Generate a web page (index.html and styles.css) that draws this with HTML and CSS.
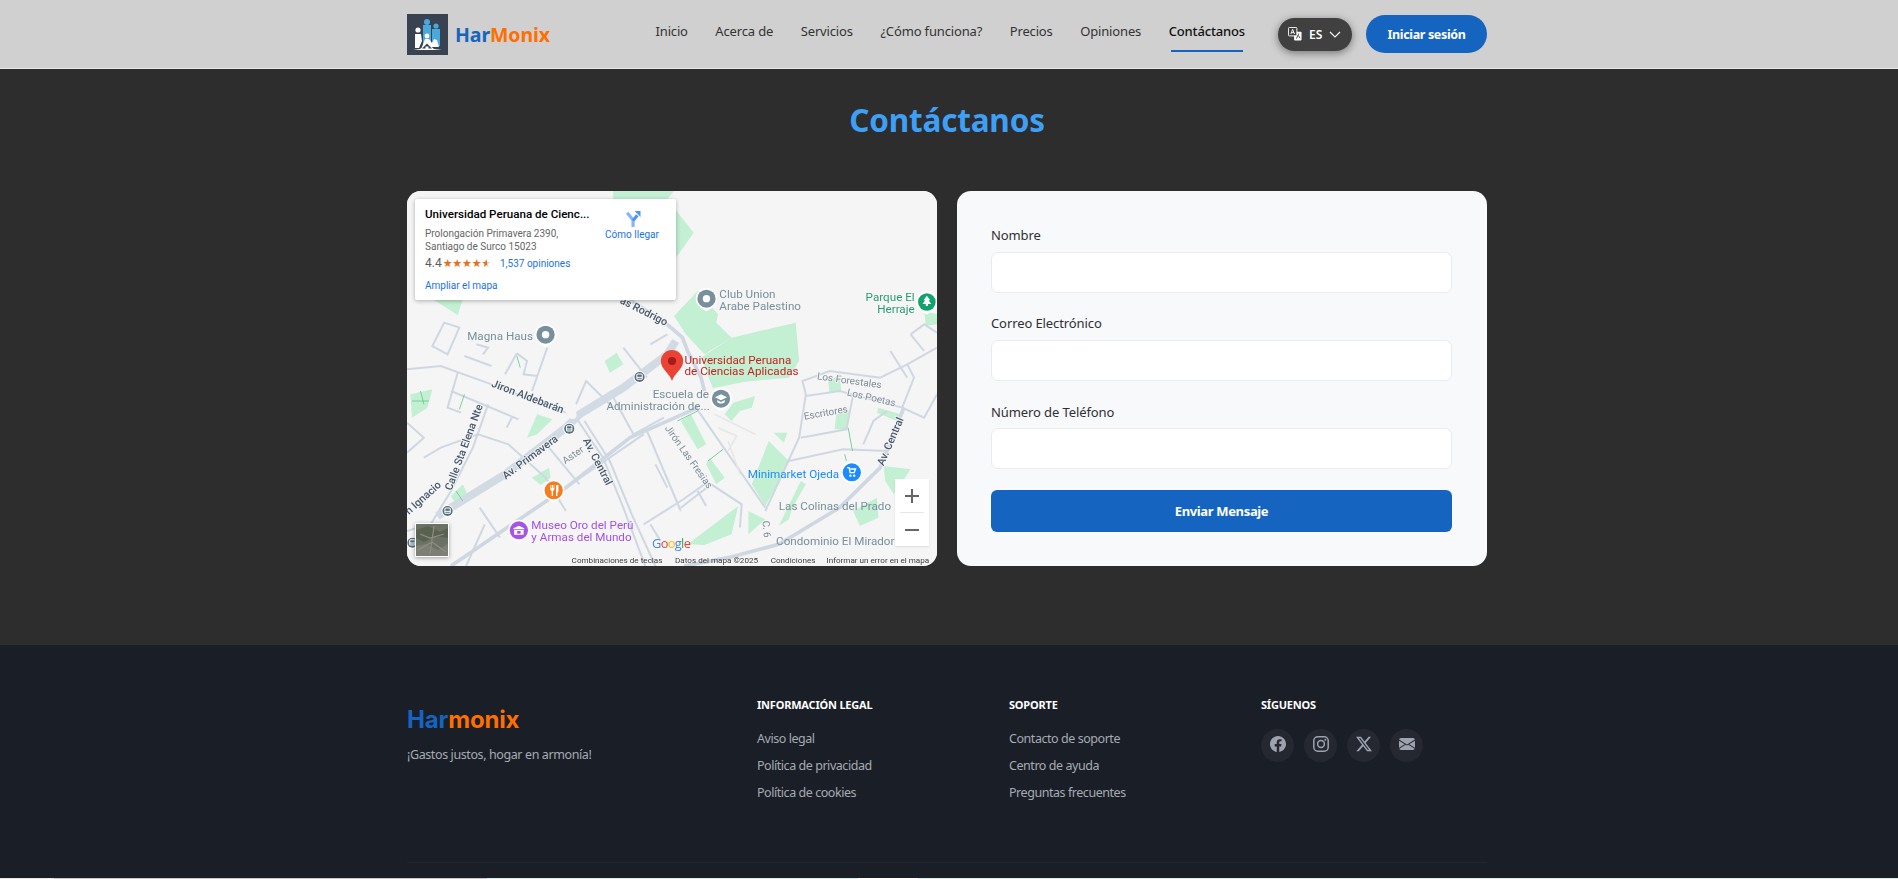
FILE: index.html
```html
<!DOCTYPE html>
<html lang="es">
<head>
<meta charset="utf-8">
<title>HarMonix - Contáctanos</title>
<link rel="stylesheet" href="styles.css">
</head>
<body>
<header class="site-header">
  <div class="wrap header-inner">
    <a class="brand" href="#">
      <svg class="brand-logo" viewBox="0 0 41 41">
        <rect width="41" height="41" fill="#394250"/>
        <rect x="16" y="11" width="8" height="19" fill="#4aa9dc"/>
        <circle cx="20" cy="8" r="3" fill="#4aa9dc"/>
        <rect x="25" y="15" width="8" height="17" fill="#4aa9dc"/>
        <circle cx="29" cy="12" r="2.6" fill="#4aa9dc"/>
        <circle cx="11" cy="16" r="2.6" fill="#fff"/>
        <path d="M8 20h6l1 7-3 7H8z" fill="#fff"/>
        <circle cx="20" cy="22" r="2.4" fill="#fff"/>
        <path d="M15 33l3-8h4l3 4 2-4 3 1 2 7z" fill="#fff"/>
        <path d="M6 36l7-1 7-6 7 6 8 1z" fill="#fff"/>
        <path d="M20 29.500l-5 5h10z" fill="#394250"/>
        <rect x="18.500" y="32.500" width="3" height="2.500" fill="#fff"/>
      </svg>
      <span class="brand-name"><span class="c-blue">Har</span><span class="c-orange">Monix</span></span>
    </a>
    <nav class="main-nav">
      <a href="#">Inicio</a>
      <a href="#">Acerca de</a>
      <a href="#">Servicios</a>
      <a href="#">¿Cómo funciona?</a>
      <a href="#">Precios</a>
      <a href="#">Opiniones</a>
      <a href="#" class="active">Contáctanos</a>
    </nav>
    <button class="lang-btn" type="button">
      <svg class="lang-icon" viewBox="0 0 15 15">
        <rect x="6.500" y="5" width="8" height="9.500" rx="1" fill="#fff"/>
        <path d="M9 12.500l2.500-5.500M11 9l2 3" stroke="#404040" stroke-width="1" fill="none"/>
        <rect x="0.500" y="0.500" width="9" height="9" rx="1" fill="#404040" stroke="#fff"/>
        <path d="M3 7.500L5 2.500l2 5M3.700 6h2.600" stroke="#fff" stroke-width="1" fill="none"/>
      </svg>
      <span>ES</span>
      <svg class="lang-chevron" viewBox="0 0 12 7"><path d="M1 1l5 5 5-5" fill="none" stroke="#fff" stroke-width="1.100"/></svg>
    </button>
    <a class="login-btn" href="#">Iniciar sesión</a>
  </div>
</header>

<main class="contact">
  <h1 class="contact-title">Contáctanos</h1>
  <div class="wrap contact-grid">
    <section class="map">
      <svg class="map-canvas" viewBox="0 0 1568 1125" preserveAspectRatio="none">
        <defs>
          <path id="halo" d="M0 36C-6 30-32 22-32-2a32 32 0 1 1 64 0C32 22 6 30 0 36z" fill="#fff"/>
          <g id="grey-poi"><use href="#halo"/><circle cy="-2" r="27" fill="#78909c"/><circle cy="-2" r="11" fill="#fff"/></g>
          <g id="bus"><circle r="18" fill="#fff"/><circle r="15" fill="#546e7a"/><rect x="-8" y="-9" width="16" height="16" rx="3" fill="none" stroke="#fff" stroke-width="3"/><path d="M-8 1H8" stroke="#fff" stroke-width="3"/></g>
        </defs>
        <rect width="1568" height="1125" fill="#f5f5f5"/>
        <g class="parks">
          <path d="M610 0H790L770 25 848 125 796 200H610z"/>
          <path d="M790 375L860 300 920 370 915 395 960 440 880 490 825 430z"/>
          <path d="M870 500L960 440 1150 395 1160 510 1130 560 1000 572 905 592z"/>
          <path d="M965 635L1030 615 1020 650 985 660 960 690 940 670z"/>
          <path d="M76 325H165L150 372z"/>
          <path d="M585 510L620 485 640 520 600 545z"/>
          <path d="M385 670L430 685 385 730 355 740z"/>
          <path d="M10 610L75 595 60 650 15 680z"/>
          <path d="M1245 565L1280 555 1285 600 1250 605z"/>
          <path d="M1270 670L1310 660 1300 715 1265 715z"/>
          <path d="M1395 650L1460 670 1450 690 1390 665z"/>
          <path d="M1085 725L1125 725 1115 755z"/>
          <path d="M1070 750L1130 810 1090 890 1060 945 1020 880z"/>
          <path d="M810 690L840 670 885 760 860 775z"/>
          <path d="M895 800L940 860 915 880 885 820z"/>
          <path d="M1410 825L1490 835 1440 910 1415 870z"/>
          <path d="M1100 1005L1165 870 1180 880 1140 950 1130 985z"/>
          <path d="M1320 960L1390 920 1395 980 1340 1005z"/>
          <path d="M830 1060L980 945 960 1030 880 1062z"/>
          <path d="M1010 960L1060 985 1010 1030z"/>
          <path d="M130 915L165 880 185 925 150 950z"/>
          <path d="M1530 360L1568 370V400L1535 405z"/>
          <path d="M370 860L420 830 425 860 395 882z"/>
        </g>
        <g class="roads">
          <path d="M0 535L100 525 250 580 470 665"/>
          <path d="M110 395L155 410 120 490 75 465z"/>
          <path d="M415 470L370 600M170 495L250 525M205 460L240 470 225 490M325 487L355 510 345 550 385 555M325 487L290 550"/>
          <path d="M240 640L195 770 130 900 70 1000"/>
          <path d="M130 600L330 685M150 545L120 650 160 665M310 680L295 710"/>
          <path d="M0 695L50 740 0 785M50 800L100 770 210 730 300 760 410 860 470 960"/>
          <path d="M215 950L275 1040M0 1020L60 1000M175 1125L230 1000"/>
          <path d="M420 770L510 880"/>
          <path d="M500 680L580 800 640 950 705 1125M525 690L600 810 665 970 735 1125"/>
          <path d="M710 720L810 960M660 740L860 650M600 600L670 730 760 680"/>
          <path d="M500 640L530 570 610 650M640 470L710 560M720 460L770 430"/>
          <path d="M855 650L1060 950M1060 960L1160 740 1180 610 1170 570 1250 540 1400 560 1480 520 1568 470"/>
          <path d="M1180 615L1280 600 1465 650 1500 560 1480 520M1165 740L1300 715 1320 610"/>
          <path d="M1130 810L1290 775 1420 780M1350 760L1380 690 1420 660M1490 430L1530 400 1568 425M1490 430L1530 480"/>
          <path d="M1465 650L1530 680 1568 610M1430 480L1480 560"/>
          <path d="M810 950L900 880 990 940 985 1010M735 820L770 890M720 1000L750 1050M860 900L885 945M700 1000L810 930 880 880M470 890L700 730"/>
        </g>
        <g class="roads-light">
          <path d="M910 670L1030 730M920 710L975 735 950 780M950 750L985 850"/>
        </g>
        <path class="road-mid" d="M130 1125L470 890 660 740 860 650"/>
        <path class="road-mid" d="M1470 650L1400 830 1280 950 1100 1060 950 1100 820 1125"/>
        <path class="road-mid" d="M620 300L770 400 815 440 830 480 870 560 880 600"/>
        <path class="road-main" d="M90 975L290 850 470 710 510 670 640 590 770 490 795 450"/>
        <circle class="round-hole" cx="490" cy="672" r="12"/>
        <g class="green-lines">
          <path d="M325 495L335 530M40 600L50 640M15 630H65M170 610L155 655M1305 710L1318 780M1295 790L1300 810M800 690L860 660M890 810L935 775M145 900L165 930"/>
        </g>

        <use href="#grey-poi" x="886" y="325"/>
        <use href="#grey-poi" x="410" y="433"/>
        <g class="poi-teal"><use href="#halo" x="1538" y="335"/><circle cx="1538" cy="333" r="26" fill="#12a26d"/><path d="M1538 314l-10 14h5l-8 11h10v6h6v-6h10l-8-11h5z" fill="#fff"/></g>
        <g><use href="#halo" x="929" y="625"/><circle cx="929" cy="623" r="27" fill="#78909c"/><path d="M929 610l-18 9 18 9 18-9zM918 627v7c6 5 16 5 22 0v-7l-11 6z" fill="#fff"/></g>
        <g><use href="#halo" x="1316" y="846"/><circle cx="1316" cy="844" r="27" fill="#1a8cff"/><path d="M1302 830h6l3 15h12l4-11h-16" fill="none" stroke="#fff" stroke-width="4"/><circle cx="1312" cy="854" r="3.500" fill="#fff"/><circle cx="1323" cy="854" r="3.500" fill="#fff"/></g>
        <g><use href="#halo" x="434" y="900"/><circle cx="434" cy="898" r="27" fill="#f57c1f"/><path d="M424 882v12c0 4 2 5 4 6v15h4v-15c2-1 4-2 4-6v-12h-2v10h-2v-10h-3v10h-2v-10zM441 882v33h4v-11h3v-22z" fill="#fff"/></g>
        <g><use href="#halo" x="331" y="1020"/><circle cx="331" cy="1018" r="27" fill="#a653e6"/><path d="M331 1004l-16 8v3h32v-3zM317 1017h28v14h-28z" fill="#fff"/><rect x="326" y="1020" width="10" height="8" fill="#a653e6"/></g>
        <use href="#bus" x="688" y="558"/>
        <use href="#bus" x="480" y="713"/>
        <use href="#bus" x="120" y="960"/>
        <use href="#bus" x="16" y="1055"/>

        <path d="M784 477a33 33 0 0 1 33 33c0 25-25 35-33 60-8-25-33-35-33-60a33 33 0 0 1 33-33z" fill="#ea4335"/>
        <circle cx="784" cy="510" r="12" fill="#a51c1c"/>

        <g class="lbl-grey">
          <text x="924" y="321">Club Union</text>
          <text x="924" y="356">Arabe Palestino</text>
          <text x="178" y="446">Magna Haus</text>
          <text x="727" y="621">Escuela de</text>
          <text x="590" y="656">Administración de...</text>
          <text x="1100" y="957">Las Colinas del Prado</text>
          <text x="1092" y="1062">Condominio El Mirador</text>
        </g>
        <g class="lbl-teal">
          <text x="1502" y="331" text-anchor="end">Parque El</text>
          <text x="1502" y="366" text-anchor="end">Herraje</text>
        </g>
        <g class="lbl-red">
          <text x="821" y="518">Universidad Peruana</text>
          <text x="821" y="553">de Ciencias Aplicadas</text>
        </g>
        <text class="lbl-blue" x="1008" y="860">Minimarket Ojeda</text>
        <g class="lbl-purple">
          <text x="368" y="1015">Museo Oro del Perú</text>
          <text x="368" y="1050">y Armas del Mundo</text>
        </g>
        <g class="lbl-road">
          <text transform="translate(628 335) rotate(27)">as Rodrigo</text>
          <text transform="translate(248 586) rotate(21)">Jiron Aldebarán</text>
          <text transform="translate(292 866) rotate(-37)">Av. Primavera</text>
          <text transform="translate(520 748) rotate(63)">Av. Central</text>
          <text transform="translate(132 900) rotate(-70)">Calle Sta Elena Nte</text>
          <text transform="translate(1410 826) rotate(-67)">Av. Central</text>
          <text transform="translate(6 972) rotate(-42)">n Ignacio</text>
        </g>
        <g class="lbl-street">
          <text transform="translate(1212 565) rotate(8)">Los Forestales</text>
          <text transform="translate(1300 613) rotate(13)">Los Poetas</text>
          <text transform="translate(1176 686) rotate(-10)">Escritores</text>
          <text transform="translate(762 712) rotate(55)">Jirón Las Fresias</text>
          <text transform="translate(468 820) rotate(-35)">Aster</text>
          <text transform="translate(1052 990) rotate(85)">C. 6</text>
        </g>
        <text class="lbl-google" x="725" y="1072"><tspan fill="#4285f4">G</tspan><tspan fill="#ea4335">o</tspan><tspan fill="#fbbc05">o</tspan><tspan fill="#4285f4">g</tspan><tspan fill="#34a853">l</tspan><tspan fill="#ea4335">e</tspan></text>
        <g class="lbl-attr">
          <text x="487" y="1115">Combinaciones de teclas</text>
          <text x="793" y="1115">Datos del mapa ©2025</text>
          <text x="1076" y="1115">Condiciones</text>
          <text x="1241" y="1115">Informar un error en el mapa</text>
        </g>
      </svg>

      <div class="map-card">
        <div class="map-card-main">
          <div class="place-name">Universidad Peruana de Cienc...</div>
          <div class="place-address">Prolongación Primavera 2390,<br>Santiago de Surco 15023</div>
          <div class="place-rating"><span class="rating-num">4.4</span><span class="stars">★★★★<span class="star-half">★</span></span><a href="#" class="map-link reviews">1,537 opiniones</a></div>
          <a href="#" class="map-link enlarge">Ampliar el mapa</a>
        </div>
        <a href="#" class="map-directions">
          <svg class="dir-icon" viewBox="0 0 16 16">
            <path d="M8.500 16V9.500L3 2.500" fill="none" stroke="#8ab4f8" stroke-width="3"/>
            <path d="M8.500 10L12.500 5" fill="none" stroke="#4f94ee" stroke-width="3"/>
            <path d="M10 1h5.500v5.500z" fill="#4f94ee"/>
          </svg>
          <span class="map-link">Cómo llegar</span>
        </a>
      </div>
      <div class="map-zoom"><span class="zoom-btn zoom-plus"></span><span class="zoom-sep"></span><span class="zoom-btn zoom-minus"></span></div>
      <svg class="map-thumb" viewBox="0 0 32 32">
        <rect width="32" height="32" fill="#6c7263"/>
        <path d="M0 6L12 2 24 8 32 4V14L20 12 8 18 0 14z" fill="#59614f"/>
        <path d="M0 22L10 20 22 26 32 20V32H0z" fill="#7d7f75"/>
        <path d="M4 10L14 14 28 10M2 26L16 18 30 28M18 2L14 30" stroke="#8d8d84" stroke-width="1.200" fill="none"/>
      </svg>
    </section>

    <form class="contact-form">
      <div class="field">
        <label for="f-name">Nombre</label>
        <input id="f-name" type="text">
      </div>
      <div class="field">
        <label for="f-mail">Correo Electrónico</label>
        <input id="f-mail" type="email">
      </div>
      <div class="field">
        <label for="f-phone">Número de Teléfono</label>
        <input id="f-phone" type="tel">
      </div>
      <button class="submit-btn" type="button">Enviar Mensaje</button>
    </form>
  </div>
</main>

<footer class="site-footer">
  <div class="wrap footer-grid">
    <div class="footer-brand">
      <div class="footer-logo"><span class="c-blue">Har</span><span class="c-orange">monix</span></div>
      <p class="footer-tag">¡Gastos justos, hogar en armonía!</p>
    </div>
    <div class="footer-col">
      <h4>Información legal</h4>
      <a href="#">Aviso legal</a>
      <a href="#">Política de privacidad</a>
      <a href="#">Política de cookies</a>
    </div>
    <div class="footer-col">
      <h4>Soporte</h4>
      <a href="#">Contacto de soporte</a>
      <a href="#">Centro de ayuda</a>
      <a href="#">Preguntas frecuentes</a>
    </div>
    <div class="footer-col">
      <h4>Síguenos</h4>
      <div class="socials">
        <a href="#" class="social"><svg viewBox="0 0 16 16"><path d="M16 8.049c0-4.446-3.582-8.050-8-8.050C3.580 0-.002 3.603-.002 8.050c0 4.017 2.926 7.347 6.750 7.951v-5.625h-2.030V8.050H6.750V6.275c0-2.017 1.195-3.131 3.022-3.131.876 0 1.791.157 1.791.157v1.980h-1.009c-.993 0-1.303.621-1.303 1.258v1.510h2.218l-.354 2.326H9.250V16c3.824-.604 6.750-3.934 6.750-7.951"/></svg></a>
        <a href="#" class="social"><svg viewBox="0 0 16 16"><rect class="ig" x="0.800" y="0.800" width="14.400" height="14.400" rx="4"/><circle class="ig" cx="8" cy="8" r="3.400"/><circle cx="12.300" cy="3.700" r="1"/></svg></a>
        <a href="#" class="social"><svg viewBox="0 0 16 16"><path d="M12.600.750h2.454l-5.360 6.142L16 15.250h-4.937l-3.867-5.070-4.425 5.070H.316l5.733-6.570L0 .750h5.063l3.495 4.633L12.601.750Zm-.860 13.028h1.360L4.323 2.145H2.865z"/></svg></a>
        <a href="#" class="social"><svg viewBox="0 0 16 16"><path d="M.050 3.555A2 2 0 0 1 2 2h12a2 2 0 0 1 1.950 1.555L8 8.414zM0 4.697v7.104l5.803-3.558zM6.761 8.830l-6.570 4.027A2 2 0 0 0 2 14h12a2 2 0 0 0 1.808-1.144l-6.570-4.027L8 9.586zm3.436-.586L16 11.801V4.697z"/></svg></a>
      </div>
    </div>
  </div>
  <div class="wrap footer-rule"></div>
</footer>
<div class="next-edge"><span class="e1"></span><span class="e2"></span><span class="e3"></span><span class="e4"></span><span class="e5"></span></div>
</body>
</html>
```

FILE: styles.css
```css
* { box-sizing: border-box; }
html, body { margin: 0; padding: 0; }
body {
  height: 879px;
  overflow: hidden;
  background: #2d2d2d;
  font-family: "Noto Sans", "Open Sans", sans-serif;
  color: #222;
}
a { text-decoration: none; color: inherit; }
.wrap { width: 1080px; margin-left: 407px; }
.c-blue { color: #1565c0; }
.c-orange { color: #ff6f00; }

/* header */
.site-header {
  height: 69px;
  background: #d0d0d0;
  border-bottom: 1px solid #e6e6e6;
}
.header-inner { display: flex; align-items: center; height: 68px; }
.brand { display: flex; align-items: center; gap: 7px; }
.brand-logo { width: 41px; height: 41px; display: block; }
.brand-name { font-size: 19.500px; font-weight: 700; letter-spacing: -0.1px; }
.main-nav {
  display: flex;
  gap: 27.500px;
  margin-left: auto;
  align-self: stretch;
  align-items: center;
  padding-bottom: 7px;
}
.main-nav a {
  position: relative;
  font-size: 13px;
  letter-spacing: -0.15px;
  color: #333;
}
.main-nav a.active { color: #111; font-weight: 500; }
.main-nav a.active::after {
  content: "";
  position: absolute;
  left: 2px;
  right: 2px;
  top: 28px;
  height: 2px;
  background: #1565c0;
}
.lang-btn {
  display: flex;
  align-items: center;
  width: 74px;
  height: 33px;
  margin-left: 33px;
  padding: 0 0 0 10px;
  border: 0;
  border-radius: 17px;
  background: #404040;
  box-shadow: 0 2px 8px rgba(0, 0, 0, .45);
  color: #fff;
  font: 600 12px "Noto Sans", sans-serif;
}
.lang-icon { width: 14px; height: 14px; margin-right: 7px; }
.lang-chevron { width: 12px; height: 7px; margin-left: 7px; }
.login-btn {
  display: flex;
  align-items: center;
  justify-content: center;
  width: 121px;
  height: 38px;
  margin-left: 14px;
  border-radius: 19px;
  background: #1565c0;
  color: #fff;
  font-size: 12.500px;
  font-weight: 700;
  letter-spacing: -0.35px;
}

/* contact */
.contact { height: 576px; padding-top: 30px; }
.contact-title {
  margin: 0;
  height: 92px;
  padding-right: 4px;
  text-align: center;
  font-size: 31.500px;
  line-height: 42px;
  font-weight: 700;
  letter-spacing: -0.2px;
  color: #3d9ff5;
}
.contact-grid { display: grid; grid-template-columns: 530px 530px; gap: 20px; }
.map {
  position: relative;
  height: 375px;
  border-radius: 14px;
  overflow: hidden;
  background: #f5f5f5;
}
.map-canvas {
  display: block;
  width: 530px;
  height: 375px;
  font-family: Roboto, sans-serif;
  filter: blur(.3px);
}
.parks path { fill: #c3efd3; }
.roads path { fill: none; stroke: #cfd8e2; stroke-width: 6; }
.roads-light path { fill: none; stroke: #e7e7e7; stroke-width: 5; }
.road-mid { fill: none; stroke: #cfd8e2; stroke-width: 11; }
.road-main { fill: none; stroke: #d2dbe4; stroke-width: 24; }
.round-hole { fill: #f5f5f5; }
.green-lines path { fill: none; stroke: #65c98d; stroke-width: 2.500; }
.lbl-grey text { font-size: 34.500px; fill: #78909c; }
.lbl-teal text { font-size: 34.500px; fill: #2a9c74; }
.lbl-red text { font-size: 34.500px; fill: #c5221f; }
.lbl-blue { font-size: 34.500px; fill: #1a8cff; }
.lbl-purple text { font-size: 34.500px; fill: #a050ea; }
.lbl-road text {
  font-size: 32px;
  font-weight: 500;
  fill: #47586c;
  stroke: #f5f5f5;
  stroke-width: 5px;
  paint-order: stroke;
}
.lbl-street text {
  font-size: 29.500px;
  fill: #7d8b99;
  stroke: #f5f5f5;
  stroke-width: 5px;
  paint-order: stroke;
}
.lbl-google { font-size: 38px; font-weight: 500; font-family: "Open Sans", sans-serif; letter-spacing: -2px; }
.lbl-attr text { font-size: 24px; fill: #3c3c3c; }

.map-card {
  position: absolute;
  left: 8px;
  top: 8px;
  width: 261px;
  height: 101px;
  display: flex;
  padding: 8px 10px;
  background: #fff;
  border-radius: 2px;
  box-shadow: 0 1px 4px rgba(0, 0, 0, .3);
  font-family: Roboto, sans-serif;
}
.map-card-main { flex: 1; }
.place-name { font-size: 11.600px; line-height: 15px; font-weight: 500; color: #000; white-space: nowrap; }
.place-address { margin-top: 5px; font-size: 10px; line-height: 13px; color: #666; }
.place-rating { display: flex; align-items: center; margin-top: 3px; height: 14px; }
.rating-num { font-size: 12px; color: #5b5b5b; }
.stars { margin-left: 1px; font-size: 11px; letter-spacing: -0.2px; color: #e7711b; font-family: "DejaVu Sans", sans-serif; }
.star-half {
  background: linear-gradient(90deg, #e7711b 0 60%, #cfcfcf 60%);
  -webkit-background-clip: text;
  background-clip: text;
  color: transparent;
}
.map-link { font-size: 10px; color: #1a73e8; white-space: nowrap; }
.reviews { margin-left: 9px; }
.enlarge { display: block; margin-top: 10px; }
.map-directions {
  width: 56px;
  display: flex;
  flex-direction: column;
  align-items: center;
  gap: 1px;
  margin-right: 6px;
  padding-top: 2px;
}
.dir-icon { width: 17px; height: 19px; }
.map-zoom {
  position: absolute;
  right: 8px;
  top: 288px;
  width: 34px;
  height: 67px;
  display: flex;
  flex-direction: column;
  align-items: center;
  background: #fff;
  box-shadow: 0 1px 2px rgba(0, 0, 0, .1);
}
.zoom-btn { position: relative; width: 34px; height: 33px; flex: none; }
.zoom-sep { width: 24px; height: 1px; background: #e6e6e6; flex: none; }
.zoom-btn::before {
  content: "";
  position: absolute;
  left: 10px;
  top: 16px;
  width: 14px;
  height: 2px;
  background: #666;
}
.zoom-plus::after {
  content: "";
  position: absolute;
  left: 16px;
  top: 10px;
  width: 2px;
  height: 14px;
  background: #666;
}
.map-thumb {
  position: absolute;
  left: 8px;
  top: 332px;
  width: 34px;
  height: 34px;
  border: 1px solid #fff;
  box-shadow: 0 1px 4px rgba(0, 0, 0, .35);
}

/* form */
.contact-form {
  height: 375px;
  padding: 30px 35px 0 34px;
  background: #f8f9fb;
  border-radius: 14px;
}
.field { height: 88px; }
.field label {
  display: block;
  height: 31px;
  font-size: 13px;
  line-height: 28px;
  letter-spacing: -0.1px;
  color: #2f2f33;
}
.field:nth-child(3) label { line-height: 30px; }
.field input {
  display: block;
  width: 100%;
  height: 41px;
  margin: 0;
  padding: 0 12px;
  background: #fff;
  border: 1px solid #e9ebef;
  border-radius: 7px;
}
.submit-btn {
  display: block;
  width: 100%;
  height: 42px;
  margin-top: 5px;
  border: 0;
  border-radius: 6px;
  background: #1565c0;
  color: #fff;
  font: 700 13px "Noto Sans", sans-serif;
  letter-spacing: -0.35px;
}

/* footer */
.site-footer { height: 233px; background: #1a1e26; padding-top: 50px; }
.footer-grid {
  display: grid;
  grid-template-columns: 324px 226px 226px 226px;
  column-gap: 26px;
  height: 167px;
}
.footer-logo { margin-top: 10px; font: 700 24px/30px Inter, sans-serif; letter-spacing: -0.2px; }
.footer-tag { margin: 10px 0 0; font-size: 12.500px; line-height: 20px; letter-spacing: -0.4px; color: #a6abb3; }
.footer-col h4 {
  margin: 0 0 14px;
  font-size: 11px;
  line-height: 20px;
  font-weight: 700;
  letter-spacing: -0.2px;
  text-transform: uppercase;
  color: #fff;
}
.footer-col > a {
  display: block;
  height: 27px;
  font-size: 12.500px;
  line-height: 20px;
  letter-spacing: -0.45px;
  color: #a6abb3;
}
.socials { display: flex; gap: 10px; margin-top: 0; }
.social {
  width: 33px;
  height: 33px;
  display: flex;
  align-items: center;
  justify-content: center;
  padding-bottom: 4px;
  border-radius: 50%;
  background: #252830;
}
.social svg { width: 16px; height: 16px; fill: #9ca3af; }
.social .ig { fill: none; stroke: #9ca3af; stroke-width: 1.500; }
.footer-rule { height: 1px; background: #23262f; }
.next-edge { display: flex; height: 1px; }
.next-edge span { display: block; height: 1px; }
.e1 { width: 54px; background: #e9e9e9; }
.e2 { width: 433px; background: #c9c9c9; }
.e3 { width: 371px; background: #dcecea; }
.e4 { width: 60px; background: #fff; }
.e5 { flex: 1; background: #dcecea; }
```
